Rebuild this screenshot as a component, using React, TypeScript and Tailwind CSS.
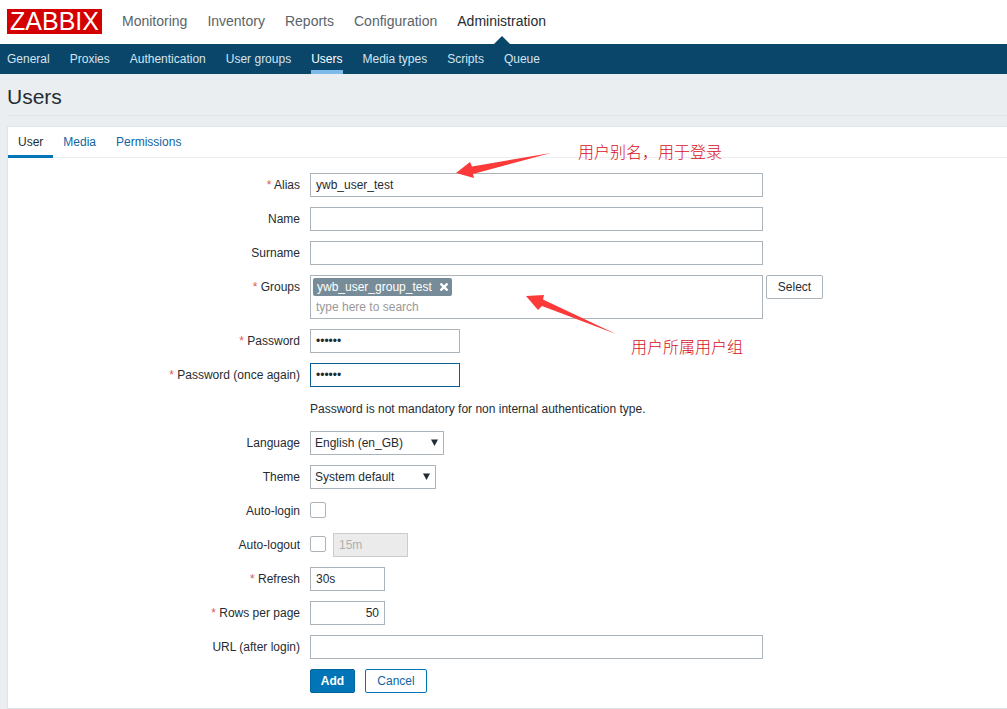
import React, { useState } from 'react';
import clsx from 'clsx';

const mainMenu = ['Monitoring', 'Inventory', 'Reports', 'Configuration', 'Administration'];
const subMenu = [
  'General',
  'Proxies',
  'Authentication',
  'User groups',
  'Users',
  'Media types',
  'Scripts',
  'Queue',
];
const tabs = ['User', 'Media', 'Permissions'];

const inputClass =
  'block h-6 border border-[#acb4bb] bg-white px-[5px] text-[#1f2c33] outline-none focus:border-[#0a5c91]';

type RowProps = {
  label?: string;
  htmlFor?: string;
  required?: boolean;
  children: React.ReactNode;
};

function Row({ label, htmlFor, required, children }: RowProps) {
  return (
    <div className="flex items-start gap-2.5">
      <div className="w-[292px] shrink-0 text-right leading-6">
        {label && (
          <label htmlFor={htmlFor}>
            {required && <span className="text-[#e45959]">* </span>}
            {label}
          </label>
        )}
      </div>
      <div className="flex min-h-6 min-w-0 flex-1 items-start leading-6">{children}</div>
    </div>
  );
}

type DropDownProps = {
  id: string;
  className: string;
  options: string[];
};

function DropDown({ id, className, options }: DropDownProps) {
  return (
    <div className={clsx('relative', className)}>
      <select
        id={id}
        className="block h-6 w-full appearance-none border border-[#acb4bb] bg-white px-1 pb-px leading-5 outline-none"
      >
        {options.map((option) => (
          <option key={option}>{option}</option>
        ))}
      </select>
      <svg
        className="pointer-events-none absolute top-2 right-1.5 h-[7px] w-[7px]"
        viewBox="0 0 7 7"
        fill="#1f2c33"
      >
        <path d="M0 0.5h7L3.5 7z" />
      </svg>
    </div>
  );
}

function CheckBox({ id, ...rest }: React.InputHTMLAttributes<HTMLInputElement>) {
  return (
    <input
      id={id}
      type="checkbox"
      className="my-[3px] block h-4 w-4 appearance-none rounded-xs border border-[#acb4bb] bg-white checked:bg-[#0275b8]"
      {...rest}
    />
  );
}

export default function App() {
  const [activeTab, setActiveTab] = useState('User');
  const [groups, setGroups] = useState(['ywb_user_group_test']);
  const [autoLogout, setAutoLogout] = useState(false);

  return (
    <div className="min-h-screen bg-[#ebeef0] font-['Liberation_Sans',Arial,sans-serif] text-xs text-[#1f2c33]">
      <header>
        <div className="flex h-11 items-start gap-5 bg-white pl-[7px]">
          <a
            href="#"
            className="mt-[9px] flex h-[25px] w-[95px] items-center justify-center bg-[#d40000] text-[25px] leading-none text-white"
          >
            ZABBIX
          </a>
          <nav className="flex h-full gap-5 text-sm leading-[42px]">
            {mainMenu.map((item) => (
              <a
                key={item}
                href="#"
                className={clsx(
                  'relative',
                  item === 'Administration' ? 'text-[#1f2c33]' : 'text-[#5a6469]'
                )}
              >
                {item}
                {item === 'Administration' && (
                  <svg
                    className="absolute bottom-0 left-1/2 h-2 w-4 -translate-x-1/2"
                    viewBox="0 0 16 8"
                    fill="#0a466a"
                  >
                    <path d="M0 8l8-8 8 8z" />
                  </svg>
                )}
              </a>
            ))}
          </nav>
        </div>
        <nav className="flex h-[30px] gap-5 bg-[#0a466a] pl-[7px] leading-[30px]">
          {subMenu.map((item) => (
            <a
              key={item}
              href="#"
              className={clsx(
                'h-full',
                item === 'Users'
                  ? 'border-b-4 border-[#7dbcea] text-white'
                  : 'text-[#d5e4ee]'
              )}
            >
              {item}
            </a>
          ))}
        </nav>
      </header>

      <main className="pl-[7px]">
        <h1 className="mb-2.5 h-[42px] border-b border-[#dfe4e7] text-[21px] leading-[46px]">Users</h1>

        <div className="relative border border-r-0 border-[#dfe4e7] bg-white">
          <div className="flex h-[31px] border-b border-[#ebeef0]">
            {tabs.map((tab) => (
              <button
                key={tab}
                type="button"
                onClick={() => setActiveTab(tab)}
                className={clsx(
                  'h-[31px] border-b-3 px-2.5 pt-0.5',
                  activeTab === tab
                    ? 'border-[#0275b8]'
                    : 'border-transparent text-[#0f66a3]'
                )}
              >
                {tab}
              </button>
            ))}
          </div>

          <form
            className="flex flex-col gap-2.5 pt-[15px] pb-[15px]"
            onSubmit={(e) => e.preventDefault()}
          >
            <Row label="Alias" htmlFor="alias" required>
              <input id="alias" className={clsx(inputClass, 'w-[453px]')} defaultValue="ywb_user_test" />
            </Row>
            <Row label="Name" htmlFor="name">
              <input id="name" className={clsx(inputClass, 'w-[453px]')} />
            </Row>
            <Row label="Surname" htmlFor="surname">
              <input id="surname" className={clsx(inputClass, 'w-[453px]')} />
            </Row>
            <Row label="Groups" htmlFor="groups" required>
              <div className="h-11 w-[453px] border border-[#acb4bb] bg-white px-0.5 pt-0.5">
                <div className="flex h-[18px] gap-1">
                  {groups.map((group) => (
                    <span
                      key={group}
                      className="flex items-center gap-2 rounded-xs bg-[#768d99] px-1 leading-[18px] text-white"
                    >
                      {group}
                      <button
                        type="button"
                        aria-label="Remove"
                        onClick={() => setGroups(groups.filter((g) => g !== group))}
                      >
                        <svg className="h-2 w-2" viewBox="0 0 8 8" stroke="white" strokeWidth="2.4">
                          <path d="M0.5 0.5l7 7M7.5 0.5l-7 7" />
                        </svg>
                      </button>
                    </span>
                  ))}
                </div>
                <input
                  id="groups"
                  placeholder="type here to search"
                  className="block h-[22px] w-full px-[3px] outline-none placeholder:text-[#999999]"
                />
              </div>
              <button
                type="button"
                className="ml-[3px] h-6 w-[57px] rounded-xs border border-[#acb4bb] bg-white pb-px leading-5"
              >
                Select
              </button>
            </Row>
            <Row label="Password" htmlFor="password1" required>
              <input
                id="password1"
                type="password"
                className={clsx(inputClass, 'w-[150px]')}
                defaultValue="zabbix"
              />
            </Row>
            <Row label="Password (once again)" htmlFor="password2" required>
              <input
                id="password2"
                type="password"
                className="block h-6 w-[150px] border border-[#0a5c91] bg-white px-[5px] outline-none"
                defaultValue="zabbix"
              />
            </Row>
            <Row>Password is not mandatory for non internal authentication type.</Row>
            <Row label="Language" htmlFor="lang">
              <DropDown id="lang" className="w-[134px]" options={['English (en_GB)']} />
            </Row>
            <Row label="Theme" htmlFor="theme">
              <DropDown id="theme" className="w-[126px]" options={['System default']} />
            </Row>
            <Row label="Auto-login" htmlFor="autologin">
              <CheckBox id="autologin" />
            </Row>
            <Row label="Auto-logout" htmlFor="autologout">
              <CheckBox
                id="autologout"
                checked={autoLogout}
                onChange={(e) => setAutoLogout(e.target.checked)}
              />
              <input
                aria-label="Auto-logout period"
                disabled={!autoLogout}
                defaultValue="15m"
                className="ml-[7px] block h-6 w-[75px] border border-[#acb4bb] px-[5px] disabled:border-[#c8cdd1] disabled:bg-[#ebebeb] disabled:text-[#b0b0b0]"
              />
            </Row>
            <Row label="Refresh" htmlFor="refresh" required>
              <input id="refresh" className={clsx(inputClass, 'w-[75px]')} defaultValue="30s" />
            </Row>
            <Row label="Rows per page" htmlFor="rows" required>
              <input id="rows" className={clsx(inputClass, 'w-[75px] text-right')} defaultValue="50" />
            </Row>
            <Row label="URL (after login)" htmlFor="url">
              <input id="url" className={clsx(inputClass, 'w-[453px]')} />
            </Row>
            <Row>
              <div className="flex gap-2.5">
                <button
                  type="submit"
                  className="h-6 w-[45px] rounded-xs border border-[#02659f] bg-[#0275b8] pb-px leading-5 font-bold text-white"
                >
                  Add
                </button>
                <button
                  type="button"
                  className="h-6 w-[62px] rounded-xs border border-[#0275b8] bg-white pb-px leading-5 text-[#0f66a3]"
                >
                  Cancel
                </button>
              </div>
            </Row>
          </form>

          {/* Notes over the form */}
          <div className="pointer-events-none absolute top-3.5 left-[448px] flex items-start gap-6 font-['Noto_Sans_CJK_SC',sans-serif] text-base leading-5 font-light text-[#d8101c]">
            <svg className="mt-3 h-[26px] w-[98px]" viewBox="0 0 98 26" fill="#fc3a3a">
              <path d="M0 20L14 9l2 4.500L95 0 17 21l1 4z" />
            </svg>
            用户别名，用于登录
          </div>
          <div className="pointer-events-none absolute top-[168px] left-[518px] flex items-end gap-3.5 font-['Noto_Sans_CJK_SC',sans-serif] text-base leading-5 font-light text-[#d8101c]">
            <svg className="mb-[21px] h-10 w-[91px]" viewBox="0 0 91 40" fill="#fc3a3a">
              <path d="M0 1L18 0l-1 4.500L90 39 16 11l-4 4z" />
            </svg>
            用户所属用户组
          </div>
        </div>
      </main>
    </div>
  );
}
